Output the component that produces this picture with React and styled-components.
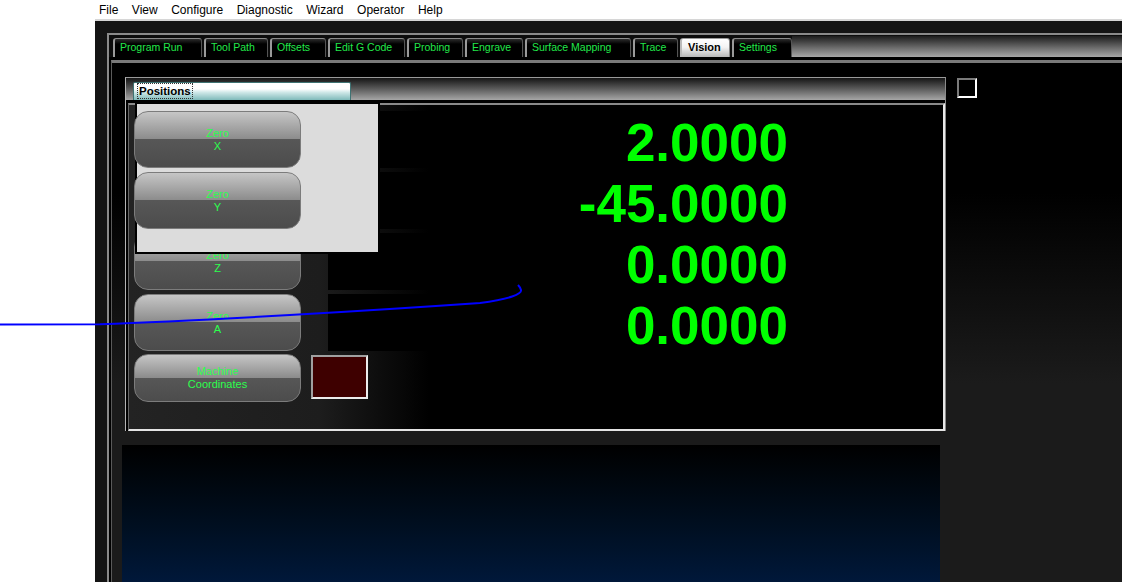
import React from 'react'
import styled, { createGlobalStyle } from 'styled-components'

const GlobalStyle = createGlobalStyle`
  html, body {
    margin: 0;
    padding: 0;
    background: #fff;
  }
  * { box-sizing: border-box; }
`

const Page = styled.div`
  position: relative;
  width: 1122px;
  height: 582px;
  overflow: hidden;
  background: #fff;
  font-family: "Liberation Sans", Arial, sans-serif;
`

const MenuBar = styled.div`
  height: 19px;
  display: flex;
  gap: 13.5px;
  padding: 1px 0 0 99px;
  font-size: 12px;
  line-height: 19px;
  color: #000;
`

const MenuItem = styled.span``

const Workspace = styled.div`
  display: flex;
  height: 563px;
`

const Spacer = styled.div`
  width: 95px;
  flex-shrink: 0;
`

const MainWindow = styled.div`
  flex: 1;
  display: flex;
  flex-direction: column;
  background: #141414;
  border-top: 2px solid #d6d6d6;
  padding: 12px 0 0 12px;
`

const TabControl = styled.div`
  flex: 1;
  display: flex;
  flex-direction: column;
  background: #000;
  border-top: 2px solid #8a8a8a;
  border-left: 2px solid #8a8a8a;
`

const TabStrip = styled.div`
  height: 22px;
  display: flex;
  align-items: flex-end;
  gap: 2px;
  padding-left: 4px;
  background: #0c0c0c;
`

const Tab = styled.div`
  width: ${p => p.$w}px;
  height: 19px;
  flex-shrink: 0;
  border-top: 1px solid ${p => (p.$active ? '#9a9a9a' : '#8a8a8a')};
  border-left: 2px solid ${p => (p.$active ? '#bbb' : '#9a9a9a')};
  border-right: 1px solid ${p => (p.$active ? '#888' : '#555')};
  border-radius: 3px 3px 0 0;
  background: ${p =>
    p.$active
      ? 'linear-gradient(to bottom, #ffffff 0%, #f4f4f4 45%, #b8b8b8 100%)'
      : 'linear-gradient(to bottom, #2c2c2c 0px, #000 5px)'};
  color: ${p => (p.$active ? '#000' : '#22e84a')};
  font-size: ${p => (p.$active ? '11px' : '10.5px')};
  font-weight: ${p => (p.$active ? 'bold' : 'normal')};
  line-height: 17px;
  padding-left: ${p => (p.$active ? '6px' : '5px')};
  white-space: nowrap;
  overflow: hidden;
`

const TabFill = styled.div`
  flex: 1;
  height: 21px;
  margin-left: -2px;
  background: linear-gradient(to bottom, #1c1c1c 0%, #6a6a6a 55%, #a8a8a8 100%);
`

const TabBody = styled.div`
  flex: 1;
  display: flex;
  flex-direction: column;
  margin: 3px 0 0 2px;
  border-top: 3px solid #7a7a7a;
  border-left: 1px solid #5a5a5a;
  padding: 14px 0 0 13px;
  background: linear-gradient(to bottom, #000 0px, #000 130px, #1b1b1b 320px, #1b1b1b 100%);
`

const TopRow = styled.div`
  display: flex;
  align-items: flex-start;
`

const Frame = styled.div`
  width: 821px;
  flex-shrink: 0;
  background: #000;
  border-top: 1px solid #9a9a9a;
  border-left: 1px solid #b4b4b4;
  border-right: 1px solid #8a8a8a;
`

const FrameHeader = styled.div`
  height: 22px;
  display: flex;
  align-items: flex-end;
  padding-left: 7px;
  background: linear-gradient(to bottom, #141414 0%, #5c5c5c 50%, #a6a6a6 100%);
`

const PanelTab = styled.div`
  width: 218px;
  height: 18px;
  padding: 1px 0 0 4px;
  border: 1px solid #3f7373;
  border-bottom: none;
  border-radius: 2px 2px 0 0;
  background: linear-gradient(to bottom, #fff 0%, #fff 35%, #cfe8e8 55%, #7fbaba 100%);
  font-size: 11.5px;
  font-weight: bold;
  color: #000;
  line-height: 14px;
`

const FocusLabel = styled.span`
  display: inline-block;
  padding: 0 1px;
  outline: 1px dotted #333;
`

const PanelBody = styled.div`
  position: relative;
  height: 328px;
  margin: 3px 0 0 2px;
  border-top: 2px solid #8a8a8a;
  border-left: 1px solid #666;
  border-right: 2px solid #e8e8e8;
  border-bottom: 2px solid #e4e4e4;
  padding: 6px 0 0 5px;
  display: flex;
  flex-direction: column;
  gap: 4px;
  background: linear-gradient(to right, #232323 0px, #1d1d1d 190px, #000 300px);
`

const Row = styled.div`
  display: flex;
  align-items: flex-start;
  margin-top: ${p => p.$nudge || 0}px;
`

const ZeroButton = styled.div`
  position: relative;
  z-index: ${p => (p.$raised ? 2 : 0)};
  width: 167px;
  height: ${p => p.$h || 57}px;
  flex-shrink: 0;
  display: flex;
  flex-direction: column;
  align-items: center;
  justify-content: center;
  border: 1px solid #7c7c7c;
  border-radius: 14px;
  background: linear-gradient(to bottom, #c6c6c6 0%, #8c8c8c 49%, #575757 50%, #4c4c4c 100%);
  color: #2cff4e;
  font-size: 11px;
  line-height: 13px;
  text-align: center;
`

const DroCell = styled.div`
  flex: 1;
  height: 57px;
  margin-left: 27px;
  padding: 3px 155px 0 0;
  background: #000;
  text-align: right;
  font-size: 53px;
  font-weight: bold;
  line-height: 57px;
  color: #00ff00;
  white-space: nowrap;
`

const Swatch = styled.div`
  width: 57px;
  height: 44px;
  margin: 1px 0 0 10px;
  border: 2px solid;
  border-color: #a0a0a0 #ececec #ececec #a0a0a0;
  background: #3e0000;
`

const Popup = styled.div`
  position: absolute;
  z-index: 1;
  left: 6px;
  top: -3px;
  width: 245px;
  height: 152px;
  background: #dcdcdc;
  border: 2px solid #000;
`

const CheckBox = styled.div`
  width: 20px;
  height: 20px;
  margin: 1px 0 0 11px;
  border: 2px solid;
  border-color: #7a7a7a #fff #fff #7a7a7a;
  background: #000;
`

const VideoPanel = styled.div`
  flex: 1;
  width: 818px;
  margin: 14px 0 0 -3px;
  background: linear-gradient(to bottom, #000 0%, #000e1e 55%, #00183a 100%);
`

const Scribble = styled.svg`
  position: absolute;
  left: 0;
  top: 0;
  z-index: 10;
  pointer-events: none;
`

const menus = ['File', 'View', 'Configure', 'Diagnostic', 'Wizard', 'Operator', 'Help']

const tabs = [
  { label: 'Program Run', w: 89 },
  { label: 'Tool Path', w: 64 },
  { label: 'Offsets', w: 56 },
  { label: 'Edit G Code', w: 77 },
  { label: 'Probing', w: 56 },
  { label: 'Engrave', w: 58 },
  { label: 'Surface Mapping', w: 106 },
  { label: 'Trace', w: 45 },
  { label: 'Vision', w: 50, active: true },
  { label: 'Settings', w: 60 },
]

const axes = [
  { axis: 'X', value: '2.0000', raised: true },
  { axis: 'Y', value: '-45.0000', raised: true },
  { axis: 'Z', value: '0.0000' },
  { axis: 'A', value: '0.0000' },
]

export default function App() {
  return (
    <Page>
      <GlobalStyle />
      <MenuBar>
        {menus.map(m => (
          <MenuItem key={m}>{m}</MenuItem>
        ))}
      </MenuBar>
      <Workspace>
        <Spacer />
        <MainWindow>
          <TabControl>
            <TabStrip>
              {tabs.map(t => (
                <Tab key={t.label} $w={t.w} $active={t.active}>
                  {t.label}
                </Tab>
              ))}
              <TabFill />
            </TabStrip>
            <TabBody>
              <TopRow>
                <Frame>
                  <FrameHeader>
                    <PanelTab>
                      <FocusLabel>Positions</FocusLabel>
                    </PanelTab>
                  </FrameHeader>
                  <PanelBody>
                    <Popup />
                    {axes.map(a => (
                      <Row key={a.axis}>
                        <ZeroButton $raised={a.raised}>
                          <span>Zero</span>
                          <span>{a.axis}</span>
                        </ZeroButton>
                        <DroCell>{a.value}</DroCell>
                      </Row>
                    ))}
                    <Row $nudge={-1}>
                      <ZeroButton $h={48}>
                        <span>Machine</span>
                        <span>Coordinates</span>
                      </ZeroButton>
                      <Swatch />
                    </Row>
                  </PanelBody>
                </Frame>
                <CheckBox />
              </TopRow>
              <VideoPanel />
            </TabBody>
          </TabControl>
        </MainWindow>
      </Workspace>
      <Scribble width="1122" height="582" viewBox="0 0 1122 582">
        <path
          d="M0 324.5 L100 324.2 C200 321 380 310 480 303 C510 299 522 294 521 290 C520.5 288 519 286 518 285"
          fill="none"
          stroke="#0000ff"
          strokeWidth="2"
        />
      </Scribble>
    </Page>
  )
}
